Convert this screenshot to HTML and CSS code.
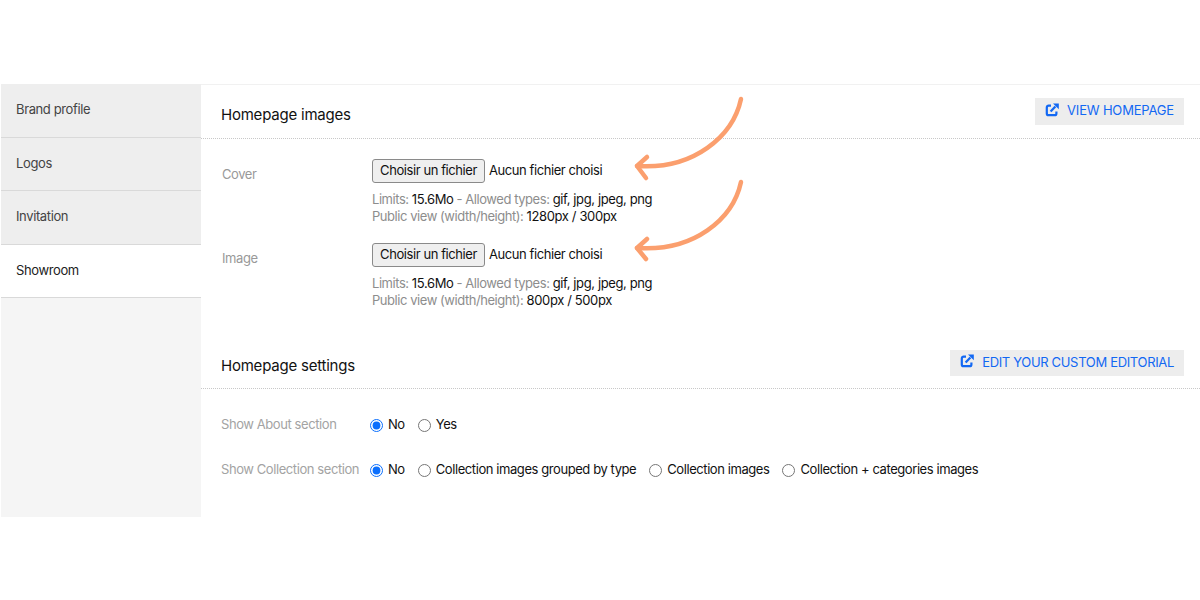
FILE: index.html
```html
<!DOCTYPE html>
<html lang="en">
<head>
<meta charset="utf-8">
<title>Showroom settings</title>
<link rel="stylesheet" href="styles.css">
</head>
<body>
<div class="page">
  <nav class="sidebar">
    <a class="nav-item">Brand profile</a>
    <a class="nav-item">Logos</a>
    <a class="nav-item">Invitation</a>
    <a class="nav-item active">Showroom</a>
  </nav>
  <main class="main">
    <header class="section-head first">
      <h2>Homepage images</h2>
      <a class="link-btn">
        <svg class="ext" viewBox="0 0 14 14"><path d="M6 2.6H3.6A1.8 1.8 0 0 0 1.8 4.4v6a1.8 1.8 0 0 0 1.8 1.8h6a1.8 1.8 0 0 0 1.8-1.8V8.4" fill="none" stroke="currentColor" stroke-width="2.2"/><path d="M5.6 8.6 10.4 3.4" fill="none" stroke="currentColor" stroke-width="2.2"/><path d="M8 .4h5.8v5.8z" fill="currentColor"/></svg>
        <span>VIEW HOMEPAGE</span>
      </a>
    </header>
    <section class="uploads">
      <div class="upload-row">
        <div class="label upload-label">Cover</div>
        <div class="upload-body">
          <div class="file"><button class="file-btn" type="button">Choisir un fichier</button><span>Aucun fichier choisi</span></div>
          <p class="hint">Limits: <b>15.6Mo</b> - Allowed types: <b>gif, jpg, jpeg, png</b><br>Public view (width/height): <b>1280px / 300px</b></p>
        </div>
      </div>
      <div class="upload-row">
        <div class="label upload-label">Image</div>
        <div class="upload-body">
          <div class="file"><button class="file-btn" type="button">Choisir un fichier</button><span>Aucun fichier choisi</span></div>
          <p class="hint">Limits: <b>15.6Mo</b> - Allowed types: <b>gif, jpg, jpeg, png</b><br>Public view (width/height): <b>800px / 500px</b></p>
        </div>
      </div>
    </section>
    <header class="section-head second">
      <h2>Homepage settings</h2>
      <a class="link-btn wide">
        <svg class="ext" viewBox="0 0 14 14"><path d="M6 2.6H3.6A1.8 1.8 0 0 0 1.8 4.4v6a1.8 1.8 0 0 0 1.8 1.8h6a1.8 1.8 0 0 0 1.8-1.8V8.4" fill="none" stroke="currentColor" stroke-width="2.2"/><path d="M5.6 8.6 10.4 3.4" fill="none" stroke="currentColor" stroke-width="2.2"/><path d="M8 .4h5.8v5.8z" fill="currentColor"/></svg>
        <span>EDIT YOUR CUSTOM EDITORIAL</span>
      </a>
    </header>
    <section class="settings">
      <div class="setting-row">
        <div class="label setting-label">Show About section</div>
        <label class="radio"><input type="radio" name="about" checked>No</label>
        <label class="radio"><input type="radio" name="about">Yes</label>
      </div>
      <div class="setting-row">
        <div class="label setting-label">Show Collection section</div>
        <label class="radio"><input type="radio" name="coll" checked>No</label>
        <label class="radio"><input type="radio" name="coll">Collection images grouped by type</label>
        <label class="radio"><input type="radio" name="coll">Collection images</label>
        <label class="radio"><input type="radio" name="coll">Collection + categories images</label>
      </div>
    </section>
  </main>
  <svg class="arrows" viewBox="0 0 1200 600" aria-hidden="true">
    <g fill="none" stroke="#fb9f6e" stroke-width="4.5" stroke-linecap="round" stroke-linejoin="round">
      <path d="M741 99C733 136 694 170 637 166"/>
      <path d="M647 157 637 166 646 178"/>
      <path d="M741 182C733 219 694 252 637 248"/>
      <path d="M647 239 637 248 646 259"/>
    </g>
  </svg>
</div>
</body>
</html>
```
FILE: styles.css
```css
* { box-sizing: border-box; }
html, body { margin: 0; padding: 0; background: #fff; }
body { font-family: Inter, "Liberation Sans", sans-serif; font-size: 13px; color: #111; letter-spacing: -.42px; }
.page { position: relative; width: 1200px; height: 600px; padding: 84px 0 0 1px; display: flex; align-items: flex-start; overflow: hidden; }
.sidebar { width: 200px; height: 433px; background: #f5f5f5; display: flex; flex-direction: column; }
.nav-item { flex: none; height: 53.5px; padding: 17px 0 0 15px; background: #eeeeee; border-bottom: 1px solid #d9d9d9; color: #444; line-height: 16px; letter-spacing: -.38px; }
.nav-item.active { background: #fff; color: #222; }
.main { flex: 1; height: 433px; border-top: 1px solid #f1f1f1; }
.section-head { display: flex; justify-content: space-between; border-bottom: 1px dotted #c8c8c8; padding: 0 16px 0 20px; }
.section-head.first { height: 54px; padding-top: 13px; }
.section-head.second { height: 39px; }
.section-head h2 { margin: 0; font-size: 15px; font-weight: 400; line-height: 18px; color: #111; letter-spacing: -.22px; padding-top: 8px; }
.section-head.second h2 { padding-top: 7px; }
.link-btn { height: 27px; padding: 0 10px 3px; display: flex; align-items: center; gap: 8px; background: #ededed; color: #1268f3; font-size: 13px; letter-spacing: -.18px; }
.link-btn.wide { letter-spacing: -.33px; height: 26px; }
.ext { width: 14px; height: 14px; margin: -1px 0 0 0; }
.uploads { padding-top: 20px; height: 211px; }
.upload-row { display: flex; height: 84px; }
.label { color: #999; line-height: 16px; }
.upload-label { width: 171px; padding: 7px 0 0 21px; }
.upload-body { flex: 1; }
.file { display: flex; align-items: center; gap: 4px; height: 24px; color: #111; }
.file-btn { width: 113px; height: 24px; padding: 0 0 2px; margin: 0; font: inherit; letter-spacing: inherit; color: #111; background: #efefef; border: 1px solid #8a8a8a; border-radius: 3px; }
.file span { margin-top: -2px; }
.hint { margin: 8px 0 0; line-height: 17px; color: #8d8d8d; letter-spacing: -.45px; }
.hint b { font-weight: 400; color: #111; letter-spacing: -.38px; }
.settings { padding: 0 0 0 20px; }
.setting-row { display: flex; align-items: center; height: 16px; margin-top: 27px; }
.setting-row + .setting-row { margin-top: 29px; }
.setting-label { width: 149px; flex: none; color: #a3a3a3; white-space: nowrap; }
.radio { display: flex; align-items: center; margin-right: 13px; color: #111; white-space: nowrap; }
.radio input { width: 13px; height: 13px; margin: 2px 5px 0 0; accent-color: #0b6ffd; }
.arrows { position: absolute; left: 0; top: 0; width: 1200px; height: 600px; pointer-events: none; }
```
